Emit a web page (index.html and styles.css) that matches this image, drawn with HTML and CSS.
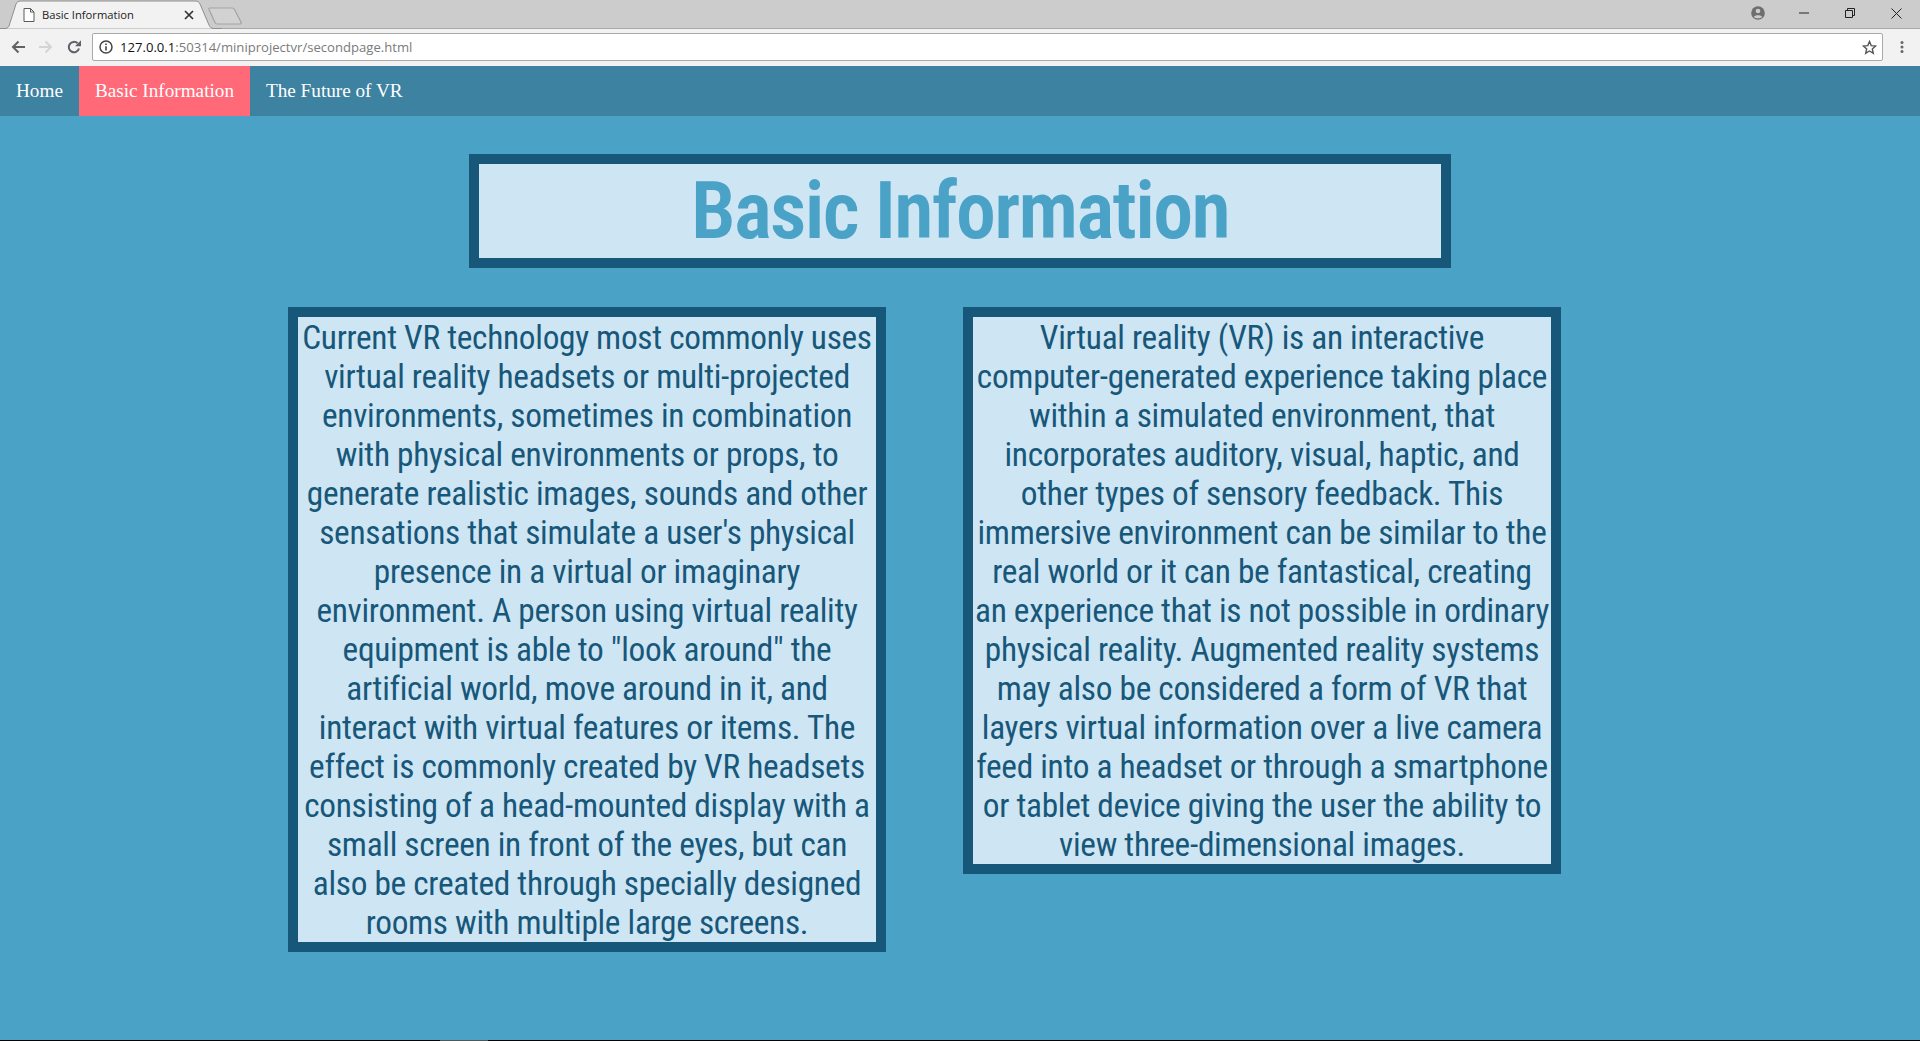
FILE: index.html
```html
<!DOCTYPE html>
<html lang="en">
<head>
<meta charset="utf-8">
<title>Basic Information</title>
<link rel="stylesheet" href="styles.css">
</head>
<body>
<header class="chrome">
  <div class="tabstrip">
    <div class="tab">
      <svg class="tab-shape" width="222" height="29" viewBox="0 0 222 29"><path d="M0 28.500H5C7.500 28.500 8.500 27 9 26L16 4C17 2 18 1 21 1H195C198 1 199 2 200 4L209 25C210 27 211 28.500 214 28.500H222" fill="#f2f2f2" stroke="#8f8f8f" stroke-width="1"/></svg>
      <svg class="tab-icon" width="12" height="14" viewBox="0 0 12 14"><path d="M1 .5H7.500L11 4V13.500H1ZM7.500 .5V4H11" fill="#fff" stroke="#5a5a5a"/></svg>
      <span class="tab-title">Basic Information</span>
      <svg class="tab-close" width="10" height="10" viewBox="0 0 10 10"><path d="M1 1L9 9M9 1L1 9" stroke="#333" stroke-width="1.700"/></svg>
    </div>
    <svg class="newtab" width="36" height="18" viewBox="0 0 36 18"><path d="M2 1H24C25 1 26 1.500 26.500 2.500L33 15C33.500 16 33 17 32 17H9C8 17 7.500 16.500 7 15.500L1 2.500C.6 1.500 1 1 2 1Z" fill="#d2d2d2" stroke="#a3a3a3" stroke-width="1.200"/></svg>
    <div class="window-controls">
      <svg width="14" height="14" viewBox="0 0 14 14"><circle cx="7" cy="7" r="6.800" fill="#6e6e6e"/><circle cx="7" cy="5" r="2.300" fill="#ccc"/><path d="M2.800 11C3.500 8.800 10.500 8.800 11.200 11C9 12.800 5 12.800 2.800 11Z" fill="#ccc"/></svg>
      <svg class="ctl-min" width="10" height="2" viewBox="0 0 10 2"><path d="M0 1H10" stroke="#222" stroke-width="1"/></svg>
      <svg class="ctl-max" width="10" height="10" viewBox="0 0 10 10"><path d="M.5 2.500H7.500V9.500H.5ZM2.500 2.500V.5H9.500V7.500H7.500" fill="none" stroke="#222"/></svg>
      <svg class="ctl-close" width="11" height="11" viewBox="0 0 11 11"><path d="M.5 .5L10.500 10.500M10.500 .5L.5 10.500" stroke="#222"/></svg>
    </div>
  </div>
  <div class="toolbar">
    <svg class="tool" width="14" height="14" viewBox="0 0 14 14"><path d="M14 7H2.500M7.500 1.500L2 7L7.500 12.500" fill="none" stroke="#5f6368" stroke-width="2"/></svg>
    <svg class="tool" width="14" height="14" viewBox="0 0 14 14"><path d="M0 7H11.500M6.500 1.500L12 7L6.500 12.500" fill="none" stroke="#d4d4d4" stroke-width="2"/></svg>
    <svg class="tool" width="14" height="14" viewBox="0 0 14 14"><path d="M12 8.500A5.200 5.200 0 1 1 10.600 3.300" fill="none" stroke="#5f6368" stroke-width="2"/><path d="M8 6.200H14V.2Z" fill="#5f6368"/></svg>
    <div class="omnibox">
      <svg class="info" width="14" height="14" viewBox="0 0 14 14"><circle cx="7" cy="7" r="6" fill="none" stroke="#444" stroke-width="1.500"/><path d="M7 6.200V10.500M7 3.500V5" stroke="#444" stroke-width="1.600"/></svg>
      <span class="url"><span class="host">127.0.0.1</span>:50314/miniprojectvr/secondpage.html</span>
      <svg class="star" width="15" height="15" viewBox="0 0 15 15"><path d="M7.500 1.500L9.200 5.600L13.700 6L10.300 8.900L11.300 13.300L7.500 11L3.700 13.300L4.700 8.900L1.300 6L5.800 5.600Z" fill="none" stroke="#555" stroke-width="1.400"/></svg>
    </div>
    <svg class="kebab" width="4" height="14" viewBox="0 0 4 14"><circle cx="2" cy="2.500" r="1.500" fill="#666"/><circle cx="2" cy="7" r="1.500" fill="#666"/><circle cx="2" cy="11.500" r="1.500" fill="#666"/></svg>
  </div>
</header>
<nav class="nav">
  <a class="nav-link">Home</a>
  <a class="nav-link active">Basic Information</a>
  <a class="nav-link">The Future of VR</a>
</nav>
<main class="page">
  <h1 class="title">Basic Information</h1>
  <div class="columns">
    <p class="card">Current VR technology most commonly uses virtual reality headsets or multi-projected environments, sometimes in combination with physical environments or props, to generate realistic images, sounds and other sensations that simulate a user's physical presence in a virtual or imaginary environment. A person using virtual reality equipment is able to "look around" the artificial world, move around in it, and interact with virtual features or items. The effect is commonly created by VR headsets consisting of a head-mounted display with a small screen in front of the eyes, but can also be created through specially designed rooms with multiple large screens.</p>
    <p class="card">Virtual reality (VR) is an interactive computer-generated experience taking place within a simulated environment, that incorporates auditory, visual, haptic, and other types of sensory feedback. This immersive environment can be similar to the real world or it can be fantastical, creating an experience that is not possible in ordinary physical reality. Augmented reality systems may also be considered a form of VR that layers virtual information over a live camera feed into a headset or through a smartphone or tablet device giving the user the ability to view three-dimensional images.</p>
  </div>
</main>
<footer class="taskbar-edge"><span class="edge-mark"></span></footer>
</body>
</html>
```
FILE: styles.css
```css
* { box-sizing: border-box; }
html, body { height: 100%; }
body {
  margin: 0;
  display: flex;
  flex-direction: column;
  background: #4aa3c7;
  overflow: hidden;
}
.chrome { height: 66px; flex: none; background: #f2f2f2; }
.tabstrip {
  height: 29px;
  background: #cccccc;
  border-bottom: 1px solid #a8a8a8;
  display: flex;
  align-items: flex-end;
  position: relative;
}
.tab {
  width: 222px;
  height: 29px;
  margin-bottom: -1px;
  position: relative;
  display: flex;
  align-items: center;
  padding: 0 28px 0 23px;
}
.tab-shape { position: absolute; left: 0; top: 0; }
.tab-icon, .tab-title, .tab-close { position: relative; }
.tab-icon { margin-right: 7px; }
.tab-title {
  font: 11.200px "Open Sans", "Liberation Sans", sans-serif;
  color: #222;
  flex: 1;
}
.newtab { margin: 0 0 3px -14px; }
.window-controls {
  margin-left: auto;
  align-self: flex-start;
  display: flex;
  align-items: center;
  height: 26px;
  padding-right: 18px;
}
.ctl-min { margin-left: 34px; }
.ctl-max { margin-left: 36px; }
.ctl-close { margin-left: 36px; }
.toolbar {
  height: 37px;
  display: flex;
  align-items: center;
  padding: 0 0 1px 11px;
}
.tool { margin-right: 14px; flex: none; }
.toolbar .tool:nth-child(3) { margin-right: 11px; }
.omnibox {
  width: 1791px;
  height: 28px;
  background: #fff;
  border: 1px solid #a9a9a9;
  border-radius: 2px;
  display: flex;
  align-items: center;
  padding: 0 5px 0 6px;
}
.info { margin-right: 7px; }
.url {
  font: 13.100px "Open Sans", "Liberation Sans", sans-serif;
  color: #7a7a7a;
  flex: 1;
}
.host { color: #111; }
.kebab { margin-left: 17px; }
.nav {
  height: 50px;
  flex: none;
  background: #3d82a0;
  display: flex;
}
.nav-link {
  font: 19.200px/50px "Liberation Serif", serif;
  color: #fff;
  padding: 0 16px;
}
.active { background: #ff6978; }
.page { flex: 1; padding-top: 38px; }
.title {
  width: 982px;
  margin: 0 auto 39px;
  border: 10px solid #17577a;
  background: #cee5f3;
  color: #4aa3c7;
  font: 600 80px/94px "Roboto Condensed", Roboto, sans-serif;
  font-stretch: condensed;
  letter-spacing: -1.700px;
  text-align: center;
}
.columns {
  display: flex;
  align-items: flex-start;
  gap: 77px;
  padding-left: 288px;
}
.card {
  width: 598px;
  margin: 0;
  padding-top: 1px;
  border: 10px solid #17577a;
  background: #cee5f3;
  color: #17577a;
  font: 400 33.330px/39px "Roboto Condensed", Roboto, sans-serif;
  font-stretch: condensed;
  letter-spacing: -0.300px;
  text-align: center;
}
.taskbar-edge { height: 1px; flex: none; background: #000; position: relative; }
.edge-mark { display: block; width: 48px; height: 1px; margin-left: 440px; background: #555; }
```
